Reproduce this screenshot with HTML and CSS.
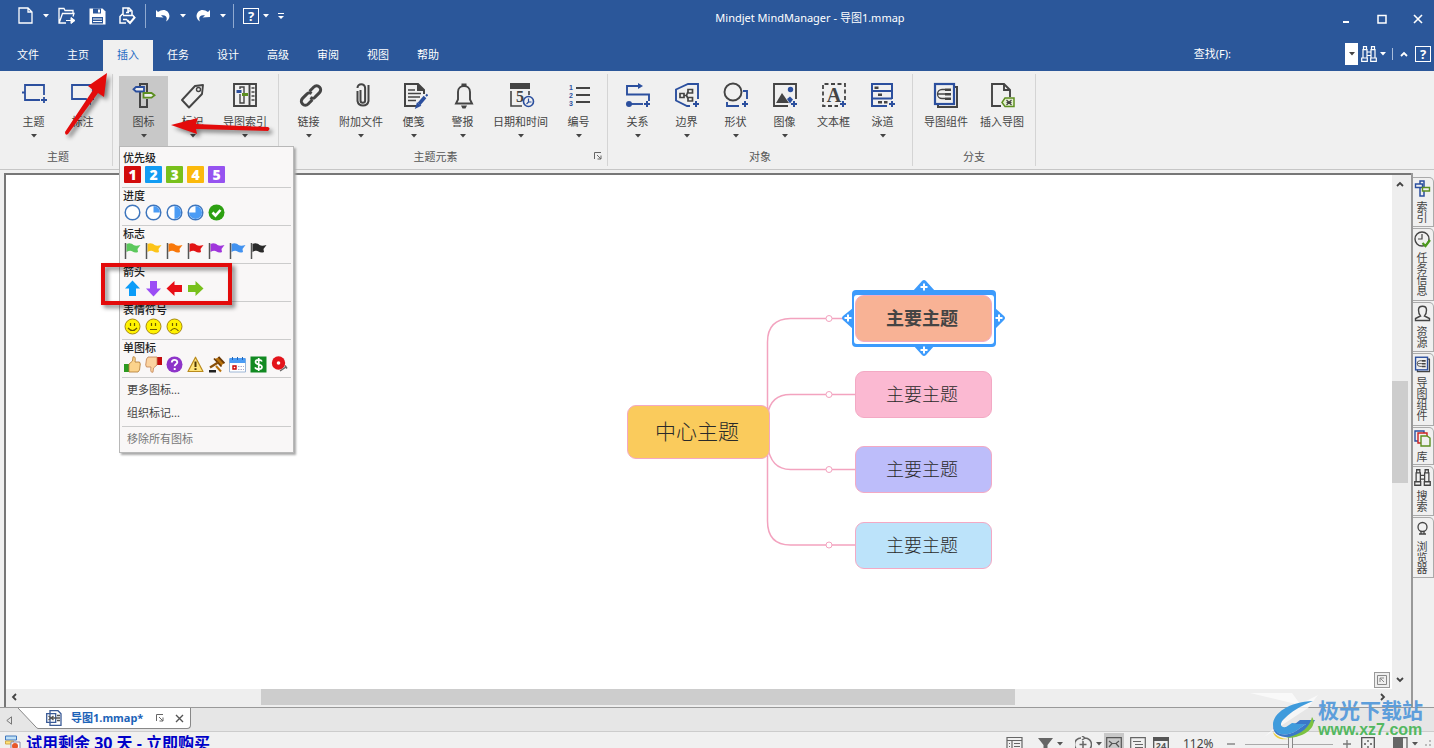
FILE: index.html
```html
<!DOCTYPE html>
<html lang="zh-CN">
<head>
<meta charset="utf-8">
<title>Mindjet MindManager - 导图1.mmap</title>
<link rel="stylesheet" href="styles.css">
</head>
<body>
<svg class="defs" aria-hidden="true">
  <symbol id="caret" viewBox="0 0 6 4"><path d="M0 0h6L3 3.5z" fill="currentColor"/></symbol>
  <symbol id="plus" viewBox="0 0 6 6"><path d="M3 0v6M0 3h6" stroke="#2b4f9e" stroke-width="2"/></symbol>
  <symbol id="flag" viewBox="0 0 17 17"><path d="M2.500 2C6 .5 8 2 9.500 3c2 1.200 4 .8 7 0L13.500 7l.5 3c-2 1-4 .6-5.500-.5C7 8.500 5 8.500 2.500 10z" fill="currentColor"/><path d="M1.500 1v16" stroke="#555" stroke-width="1.500"/></symbol>
  <symbol id="arrow" viewBox="0 0 17 17"><path d="M8.500 0.500l7.500 8h-4V16H5V8.500H1z" fill="currentColor"/></symbol>
  <symbol id="binoculars" viewBox="0 0 16 16"><path d="M2.500.7h3v3h-3zM10.500.7h3v3h-3zM2 3.700h4V12H2zM10 3.700h4V12h-4zM.7 12h5.600v3.300H.7zM9.700 12h5.600v3.300H9.700zM6 6h4v3.500H6z" fill="none" stroke="currentColor" stroke-width="1.200"/></symbol>
  <symbol id="signs" viewBox="0 0 28 28"><path d="M10 5V2h7v8M10 10v15h7v-8" fill="none" stroke="#444" stroke-width="2"/><path d="M6 5h8v4.500H6L3.500 7.200z" fill="#eee" stroke="#2b4f9e" stroke-width="1.800"/><path d="M13.500 11h8l3 2.300-3 2.300h-8z" fill="#eee" stroke="#5d8f21" stroke-width="1.800"/></symbol>
  <symbol id="signs-small" viewBox="0 0 17 17"><path d="M6 4V1h4v6M6 8v8h4v-5" fill="none" stroke="#2b4f9e" stroke-width="1.500"/><path d="M1.500 4h7v3.500h-7z" fill="#f0f0f0" stroke="#2b4f9e" stroke-width="1.400"/><path d="M8.500 7.500h7v3.500h-7z" fill="#f0f0f0" stroke="#5d8f21" stroke-width="1.400"/></symbol>
  <symbol id="parts" viewBox="0 0 28 28"><path d="M6 22v3h19V5h-3" fill="none" stroke="#444" stroke-width="2"/><rect x="3" y="2" width="19" height="20" fill="none" stroke="#2b4f9e" stroke-width="2.200"/><path d="M13 7.500H10a4 4 0 0 0 0 9h3M6 12h7" fill="none" stroke="#444" stroke-width="1.300"/><path d="M13 6.500h6v2.500h-6zM13 11h6v2.500h-6zM13 15.500h6V18h-6z" fill="#444"/></symbol>
</svg>

<header class="titlebar">
  <div class="quick">
    <button aria-label="新建"><svg width="16" height="18" viewBox="0 0 16 18"><path d="M1 1h9l4 4v11H1zM10 1v4h4" fill="none" stroke="#fff" stroke-width="1.300"/></svg></button>
    <button class="drop" aria-label="新建选项"><svg><use href="#caret"/></svg></button>
    <button class="open" aria-label="打开"><svg width="18" height="18" viewBox="0 0 18 18"><path d="M8 16H1V1.500h5l1 2h8V6M1.500 15L4.500 6.500H16l-1 3" fill="none" stroke="#fff" stroke-width="1.300"/><path d="M8 13.500h6M13 10.500l4 3-4 3z" fill="#fff" stroke="#fff"/></svg></button>
    <button class="save" aria-label="保存"><svg width="17" height="17" viewBox="0 0 17 17"><path d="M.5.500h13l3 3v13h-16z" fill="#fff"/><path d="M4 .5h8v5H4zM3 9h11v6.500H3z" fill="#2b579a"/><path d="M9 1.500h2v3H9zM4 10.500h9v1H4zM4 13h9v1H4z" fill="#fff"/></svg></button>
    <button class="print" aria-label="打印"><svg width="17" height="18" viewBox="0 0 17 18"><path d="M4 8V1h6l3 3v4M9 1v3h3M3.500 7L1 9.500V16h6M4 8.500h10l2 2.500M7 5.500h3M4 12.500h4" fill="none" stroke="#fff" stroke-width="1.500"/><path d="M8 13l3 3 5-6" fill="none" stroke="#fff" stroke-width="2"/></svg></button>
    <i class="rule"></i>
    <button aria-label="撤消"><svg width="16" height="14" viewBox="0 0 16 14"><path d="M1 8L1 1l2 2C8-1 14 1 14.500 7c0 2-1.500 4.500-3.500 5.500 2-4 0-7-5-6L8.500 8.500z" fill="#fff"/></svg></button>
    <button class="drop" aria-label="撤消选项"><svg><use href="#caret"/></svg></button>
    <button aria-label="恢复"><svg width="16" height="14" viewBox="0 0 16 14"><path d="M15 8V1l-2 2C8-1 2 1 1.500 7c0 2 1.500 4.500 3.500 5.500-2-4 0-7 5-6L7.500 8.500z" fill="#fff"/></svg></button>
    <button class="drop" aria-label="恢复选项"><svg><use href="#caret"/></svg></button>
    <i class="rule"></i>
    <button class="qhelp" aria-label="帮助"><span>?</span></button>
    <button class="drop" aria-label="帮助选项"><svg><use href="#caret"/></svg></button>
    <button class="drop" aria-label="自定义"><svg viewBox="0 0 6 6" class="custom"><path d="M0 .5h6" stroke="#fff"/><path d="M0 3h6L3 6z" fill="#fff"/></svg></button>
  </div>
  <h1>Mindjet MindManager - 导图1.mmap</h1>
  <div class="winctl">
    <button aria-label="最小化"><svg width="10" height="10" viewBox="0 0 10 10"><path d="M2 8h6" stroke="#fff" stroke-width="2"/></svg></button>
    <button aria-label="最大化"><svg width="10" height="10" viewBox="0 0 10 10"><path d="M1 1.500h8V9H1z" fill="none" stroke="#fff" stroke-width="1.500"/></svg></button>
    <button aria-label="关闭"><svg width="10" height="10" viewBox="0 0 10 10"><path d="M1 1l8 8M9 1L1 9" stroke="#fff" stroke-width="1.600"/></svg></button>
  </div>
</header>

<nav class="tabs">
  <a href="#">文件</a><a href="#">主页</a><a href="#" class="on">插入</a><a href="#">任务</a><a href="#">设计</a><a href="#">高级</a><a href="#">审阅</a><a href="#">视图</a><a href="#">帮助</a>
  <div class="find">
    <label for="find">查找(F):</label><input id="find" type="text">
    <button class="combo" aria-label="查找历史"><svg><use href="#caret"/></svg></button>
    <button class="bino" aria-label="查找"><svg width="16" height="16"><use href="#binoculars"/></svg></button>
    <button class="drop" aria-label="查找选项"><svg><use href="#caret"/></svg></button>
    <i class="bar"></i>
    <button class="fold" aria-label="折叠功能区"><svg width="8" height="6" viewBox="0 0 8 6"><path d="M1 5l3-3 3 3" fill="none" stroke="#fff" stroke-width="1.800"/></svg></button>
    <button class="qhelp" aria-label="帮助"><span>?</span></button>
  </div>
</nav>

<section class="ribbon">
  <div class="group first">
    <div class="tools">
      <button class="tool"><svg class="ic" viewBox="0 0 28 28"><path d="M24 13V3H5v15h15M2 10.500h3" fill="none" stroke="#2b4f9e" stroke-width="1.800"/><path d="M24 15v6M21 18h6" stroke="#2b4f9e" stroke-width="1.800"/></svg><span>主题</span><svg class="dd"><use href="#caret"/></svg></button>
      <button class="tool"><svg class="ic" viewBox="0 0 28 28"><path d="M14 17H3V3h21v14h-3v4l-4-4z" fill="none" stroke="#2b4f9e" stroke-width="1.800"/></svg><span>标注</span></button>
    </div>
    <p>主题</p>
  </div>
  <div class="group icons">
    <div class="tools">
      <div class="holder">
        <button class="tool on" aria-expanded="true"><svg class="ic"><use href="#signs"/></svg><span>图标</span><svg class="dd"><use href="#caret"/></svg></button>
        <div class="menu">
          <section><h2>优先级</h2><div class="row">
            <b class="p1">1</b><b class="p2">2</b><b class="p3">3</b><b class="p4">4</b><b class="p5">5</b></div></section>
          <section><h2>进度</h2><div class="row">
            <svg viewBox="0 0 17 17"><circle cx="8.500" cy="8.500" r="7.300" fill="#fff" stroke="#3f76bd" stroke-width="1.500"/></svg>
            <svg viewBox="0 0 17 17"><circle cx="8.500" cy="8.500" r="7.300" fill="#fff" stroke="#3f76bd" stroke-width="1.500"/><path d="M8.500 8.500V2a6.500 6.500 0 0 1 6.500 6.500z" fill="#4b9cf5"/></svg>
            <svg viewBox="0 0 17 17"><circle cx="8.500" cy="8.500" r="7.300" fill="#fff" stroke="#3f76bd" stroke-width="1.500"/><path d="M8.500 15V2a6.500 6.500 0 0 1 0 13z" fill="#4b9cf5"/></svg>
            <svg viewBox="0 0 17 17"><circle cx="8.500" cy="8.500" r="7.300" fill="#fff" stroke="#3f76bd" stroke-width="1.500"/><path d="M8.500 8.500V2A6.500 6.500 0 1 1 2 8.500z" fill="#4b9cf5" transform="matrix(1 0 0 1 0 0)"/></svg>
            <svg viewBox="0 0 17 17"><circle cx="8.500" cy="8.500" r="8" fill="#2da012"/><path d="M4.500 8.500l3 3L12.500 6" fill="none" stroke="#fff" stroke-width="2.600"/></svg></div></section>
          <section><h2>标志</h2><div class="row">
            <svg class="f1"><use href="#flag"/></svg><svg class="f2"><use href="#flag"/></svg><svg class="f3"><use href="#flag"/></svg><svg class="f4"><use href="#flag"/></svg><svg class="f5"><use href="#flag"/></svg><svg class="f6"><use href="#flag"/></svg><svg class="f7"><use href="#flag"/></svg></div></section>
          <section><h2>箭头</h2><div class="row">
            <svg class="a1"><use href="#arrow"/></svg><svg class="a2"><use href="#arrow"/></svg><svg class="a3"><use href="#arrow"/></svg><svg class="a4"><use href="#arrow"/></svg></div></section>
          <section><h2>表情符号</h2><div class="row">
            <svg viewBox="0 0 17 17"><circle cx="8.500" cy="8.500" r="7.500" fill="#fff200" stroke="#a88a10"/><path d="M6.500 5v3M10.500 5v3M4 10q4.500 5 9 0" fill="none" stroke="#6b5a00" stroke-width="1.200"/></svg>
            <svg viewBox="0 0 17 17"><circle cx="8.500" cy="8.500" r="7.500" fill="#fff200" stroke="#a88a10"/><path d="M6.500 5v3M10.500 5v3M5 11.500h7" fill="none" stroke="#6b5a00" stroke-width="1.200"/></svg>
            <svg viewBox="0 0 17 17"><circle cx="8.500" cy="8.500" r="7.500" fill="#fff200" stroke="#a88a10"/><path d="M6.500 5v3M10.500 5v3M4.500 13q4-5 8 0" fill="none" stroke="#6b5a00" stroke-width="1.200"/></svg></div></section>
          <section><h2>单图标</h2><div class="row">
            <svg viewBox="0 0 17 17"><path d="M0 8h5v8H0z" fill="#2c9a20"/><path d="M5 8l3.500-3L9 .8c2-.5 2.800 1 2 5.200h4.500l.8 2-.8 6-1.500 2H5z" fill="#fbd38c" stroke="#b07a30" stroke-width=".8"/></svg>
            <svg viewBox="0 0 17 17"><path d="M12 1h5v8h-5z" fill="#c40c0c"/><path d="M12 9l-3.500 3-.5 4.200c-2 .5-2.800-1-2-5.200H1.500L.7 9l.8-6L3 1h9z" fill="#fbd3a0" stroke="#c08050" stroke-width=".8"/></svg>
            <svg viewBox="0 0 17 17"><circle cx="8.500" cy="8.500" r="8" fill="#8e35c9"/><path d="M5.800 6.500c0-3.500 5.500-3.300 5.500-.3 0 1.800-2.600 1.800-2.600 4M8.700 12v2" fill="none" stroke="#fff" stroke-width="1.900"/></svg>
            <svg viewBox="0 0 17 17"><path d="M8.500 1.200L16 15.500H1z" fill="#ffe47a" stroke="#b98a1c" stroke-width="1.200" stroke-linejoin="round"/><path d="M8.500 5.500v5.500M8.500 12.300v1.800" stroke="#4d3500" stroke-width="2"/></svg>
            <svg viewBox="0 0 17 17"><path d="M7 3l4-2 5 6-3 3z" fill="#b8720d"/><path d="M6 2.500l7.500 8M10.500 .8l6 6.500" stroke="#6b3a08" stroke-width="1.800"/><path d="M10 6.500l-8 5" stroke="#8a500a" stroke-width="2.200"/><path d="M8 10l5 5.500" stroke="#b8720d" stroke-width="2"/><path d="M1 14h7v2.500H1z" fill="#222"/></svg>
            <svg viewBox="0 0 17 17"><path d="M.5 3h16v13H.5z" fill="#fff" stroke="#9fb7d6"/><path d="M.5 2h16v5H.5z" fill="#4b9cf5"/><path d="M3.500 1v3M8.500 1v3M13.500 1v3" stroke="#2366b5"/><path d="M4 10h3v3H4z" fill="none" stroke="#c00" stroke-width="1.400"/><path d="M9 10.500h6M9 13.500h6" stroke="#aac" stroke-dasharray="1.500 1"/></svg>
            <svg viewBox="0 0 17 17"><path d="M.5.500h16v16H.5z" fill="#128a22"/><path d="M12 5.500C11 3.200 5.500 3.200 5.500 6c0 3.200 6.500 1.700 6.500 5 0 3-6 2.700-7 .3M8.700 2v13" fill="none" stroke="#fff" stroke-width="1.700"/></svg>
            <svg viewBox="0 0 17 17"><circle cx="7.500" cy="7" r="6.700" fill="#e3141b"/><circle cx="7.500" cy="7" r="1.800" fill="#fff"/><path d="M9 15l6-4M14 9.500l2 3" stroke="#666" stroke-width="1.500"/></svg></div></section>
          <button>更多图标...</button>
          <button>组织标记...</button>
          <hr>
          <button class="dim">移除所有图标</button>
        </div>
      </div>
      <button class="tool"><svg class="ic" viewBox="0 0 28 28"><path d="M24 3l-1 9L10 25.500 3 18 16 4z" fill="none" stroke="#444" stroke-width="1.900" stroke-linejoin="round"/><circle cx="19.500" cy="7.500" r="2" fill="none" stroke="#444" stroke-width="1.400"/></svg><span>标记</span><svg class="dd"><use href="#caret"/></svg></button>
      <button class="tool"><svg class="ic" viewBox="0 0 28 28"><path d="M3 2h22v22H3zM18.500 2v22" fill="none" stroke="#444" stroke-width="1.900"/><path d="M20.500 6h3M20.500 10h3M20.500 14h3M20.500 18h3" stroke="#444" stroke-width="1.600"/><path d="M9 7V5h4v16H9V12" fill="none" stroke="#444" stroke-width="1.400"/><path d="M5.500 9.500h5" stroke="#2b4f9e" stroke-width="3"/><path d="M11 12.500h6" stroke="#5d8f21" stroke-width="3"/></svg><span>导图索引</span><svg class="dd"><use href="#caret"/></svg></button>
    </div>
  </div>
  <div class="group elements">
    <div class="tools">
      <button class="tool"><svg class="ic" viewBox="0 0 28 28"><g fill="none" stroke="#444" stroke-width="3" transform="rotate(-45 16 13.500)"><path d="M14 17.500H8a4 4 0 0 1 0-8h6a4 4 0 0 1 4 3"/><path d="M18 9.500h6a4 4 0 0 1 0 8h-6a4 4 0 0 1-4-3"/></g></svg><span>链接</span><svg class="dd"><use href="#caret"/></svg></button>
      <button class="tool"><svg class="ic" viewBox="0 0 28 28"><path d="M13.500 8v10.500a2.300 2.300 0 0 0 4.600 0V6a3.800 3.800 0 0 0-7.600 0" fill="none" stroke="#444" stroke-width="2"/><path d="M10.500 9v10a5.600 5.600 0 0 0 11 0V3" fill="none" stroke="#444" stroke-width="2"/></svg><span>附加文件</span><svg class="dd"><use href="#caret"/></svg></button>
      <button class="tool"><svg class="ic" viewBox="0 0 28 28"><path d="M24 12V8l-6-6H5v22h12M18 2v6h6" fill="none" stroke="#444" stroke-width="2"/><path d="M18 2l6 6h-6z" fill="#444"/><path d="M8 8h7M8 11.500h13M8 15h12M8 18.500h8" stroke="#444" stroke-width="1.500"/><path d="M19 22l6-7" stroke="#2b4f9e" stroke-width="3.500"/><path d="M26 14l1.500-1.500M16.500 25l1-3 2 1.500z" stroke="#2b4f9e" stroke-width="2"/></svg><span>便笺</span><svg class="dd"><use href="#caret"/></svg></button>
      <button class="tool"><svg class="ic" viewBox="0 0 28 28"><path d="M7 21.500h16l-2-4V10c0-8-12-8-12 0v7.500z" fill="none" stroke="#444" stroke-width="1.900"/><path d="M12.500 1.500h5v2.500h-5zM12 23.500h6l-1.500 3h-3z" fill="#444"/></svg><span>警报</span><svg class="dd"><use href="#caret"/></svg></button>
      <button class="tool"><svg class="ic" viewBox="0 0 28 28"><path d="M3 1h20v6H3z" fill="#444"/><path d="M4 9v15h11M22 9v4" fill="none" stroke="#444" stroke-width="1.600"/><text x="9" y="20" class="num">5</text><circle cx="21.500" cy="19.500" r="5" fill="#f0f0f0" stroke="#2b4f9e" stroke-width="1.600"/><path d="M21.500 16.500v3.500h3M21.500 20l-2 2" fill="none" stroke="#2b4f9e" stroke-width="1.200"/></svg><span>日期和时间</span><svg class="dd"><use href="#caret"/></svg></button>
      <button class="tool"><svg class="ic" viewBox="0 0 28 28"><g class="tiny"><text x="4" y="8">1</text><text x="4" y="16">2</text><text x="4" y="24">3</text></g><path d="M11 6h14M11 13h14M11 20h14" stroke="#444" stroke-width="2"/></svg><span>编号</span><svg class="dd"><use href="#caret"/></svg></button>
    </div>
    <p>主题元素</p>
    <button class="launcher" aria-label="更多选项"><svg width="8" height="8" viewBox="0 0 8 8"><path d="M.5 7V.5H7M3 3l4 4M7 3.500V7H3.500" fill="none" stroke="#666"/></svg></button>
  </div>
  <div class="group">
    <div class="tools">
      <button class="tool"><svg class="ic" viewBox="0 0 28 28"><path d="M14 4H3v8.500h22V19" fill="none" stroke="#2b4f9e" stroke-width="1.900"/><path d="M14 1l5 3-5 3z" fill="#2b4f9e"/><circle cx="5" cy="22" r="3" fill="#2b4f9e"/><path d="M7 22h12" stroke="#2b4f9e" stroke-width="1.900"/><use href="#plus" x="20" y="19" width="6" height="6"/></svg><span>关系</span><svg class="dd"><use href="#caret"/></svg></button>
      <button class="tool"><svg class="ic" viewBox="0 0 28 28"><path d="M25 17V2H15L3 7.500v11L14 24h3" fill="none" stroke="#2b4f9e" stroke-width="1.900"/><path d="M7 11.500h4v4H7zM15 7.500h4.500V11H15zM15 15.500h4.500V19H15zM11 13.500h2.500L15 9.500M13.500 13.500l1.500 3" fill="none" stroke="#444" stroke-width="1.700"/><use href="#plus" x="20" y="19" width="6" height="6"/></svg><span>边界</span><svg class="dd"><use href="#caret"/></svg></button>
      <button class="tool"><svg class="ic" viewBox="0 0 28 28"><circle cx="11" cy="10" r="8.500" fill="none" stroke="#444" stroke-width="1.900"/><path d="M21 9h4v8M5 20v4h12" fill="none" stroke="#2b4f9e" stroke-width="1.900"/><use href="#plus" x="20" y="19" width="6" height="6"/></svg><span>形状</span><svg class="dd"><use href="#caret"/></svg></button>
      <button class="tool"><svg class="ic" viewBox="0 0 28 28"><path d="M25 17V2H3v22h14" fill="none" stroke="#444" stroke-width="1.900"/><circle cx="19.500" cy="7.500" r="2.700" fill="#2b4f9e"/><path d="M5 21l6-10 7 10z" fill="#444"/><path d="M16 17l3-2.500 3 3-3 4z" fill="#2b4f9e"/><use href="#plus" x="20" y="19" width="6" height="6"/></svg><span>图像</span><svg class="dd"><use href="#caret"/></svg></button>
      <button class="tool"><svg class="ic" viewBox="0 0 28 28"><path d="M25 18V2H3v22h15" fill="none" stroke="#444" stroke-width="1.800" stroke-dasharray="4 2.500"/><text x="14" y="20" class="big">A</text><use href="#plus" x="20" y="19" width="6" height="6"/></svg><span>文本框</span></button>
      <button class="tool"><svg class="ic" viewBox="0 0 28 28"><path d="M23 17V2H3v22h15M3 9h20M3 16.500h20" fill="none" stroke="#2b4f9e" stroke-width="2"/><path d="M5.500 4.500h4v2.500h-4zM9 11.500h4V14H9zM9 19h4v2.500H9zM15 19h3.500v2.500H15z" fill="#444"/><use href="#plus" x="20" y="19" width="6" height="6"/></svg><span>泳道</span><svg class="dd"><use href="#caret"/></svg></button>
    </div>
    <p>对象</p>
  </div>
  <div class="group">
    <div class="tools">
      <button class="tool"><svg class="ic"><use href="#parts"/></svg><span>导图组件</span></button>
      <button class="tool"><svg class="ic" viewBox="0 0 28 28"><path d="M13 24H4V2h12l6 6v7M16 2v6h6" fill="none" stroke="#444" stroke-width="1.900"/><path d="M14 20.500l3-4.500h9v8.500h-9z" fill="#e4f0d0" stroke="#5d8f21" stroke-width="1.500"/><path d="M18.500 18l5 5M23.500 18l-5 5M18.500 20.500h5" stroke="#444" stroke-width="1.200"/></svg><span>插入导图</span></button>
    </div>
    <p>分支</p>
  </div>
</section>

<main class="work">
  <div class="frame">
    <div class="canvas">
      <svg class="links" width="870" height="420" viewBox="0 0 870 420"><g fill="none" stroke="#f3a3bf" stroke-width="1.500">
        <path d="M761.500 300V167q0-23 23-23.500H849M761.500 240q3-20.500 23-20.500H849M761.500 270q3 24.500 23 24.500H849M761.500 270v76q0 24 23 24H849"/></g>
        <g fill="#fff" stroke="#f3a3bf"><circle cx="823" cy="143.500" r="3"/><circle cx="823" cy="219.500" r="3"/><circle cx="823" cy="294.500" r="3"/><circle cx="823" cy="370" r="3"/></g></svg>
      <div class="node center">中心主题</div>
      <svg class="select" width="164" height="76" viewBox="0 0 164 76"><g fill="#3d9bfc"><path d="M71 11L80 1q2-2 4 0l9 10zM71 65L80 75q2 2 4 0l9-10zM11 28L1 36q-2 2 0 4l10 9zM153 28l9 8q2 2 0 4l-9 9z"/><rect x="10" y="10" width="144" height="57" rx="4"/></g><rect x="12" y="15" width="140" height="49" rx="3" fill="#fff"/><path d="M82 3.500v7M78.500 7h7M82 66.500v7M78.500 70h7M6 34.500v7M2.500 38h7M157 34.500v7M153.500 38h7" stroke="#fff" stroke-width="2"/></svg>
      <div class="node n1">主要主题</div>
      <div class="node n2">主要主题</div>
      <div class="node n3">主要主题</div>
      <div class="node n4">主要主题</div>
      <button class="overview" aria-label="概览"><svg width="10" height="10" viewBox="0 0 10 10"><path d="M.5.500h9v9h-9zM3 7V3h4M3 3l4 4" fill="none" stroke="#888"/></svg></button>
    </div>
    <div class="vbar"><svg width="8" height="6" viewBox="0 0 8 6"><path d="M1 5l3-3 3 3" fill="none" stroke="#444" stroke-width="1.800"/></svg><i></i><svg width="8" height="6" viewBox="0 0 8 6"><path d="M1 1l3 3 3-3" fill="none" stroke="#444" stroke-width="1.800"/></svg></div>
    <div class="hbar"><svg width="6" height="8" viewBox="0 0 6 8"><path d="M5 1L2 4l3 3" fill="none" stroke="#444" stroke-width="1.800"/></svg><i></i><svg width="6" height="8" viewBox="0 0 6 8"><path d="M1 1l3 3-3 3" fill="none" stroke="#444" stroke-width="1.800"/></svg></div>
  </div>
  <aside class="side">
    <button class="s2"><svg><use href="#signs-small"/></svg><span>索引</span></button>
    <button class="s4"><svg viewBox="0 0 17 17"><circle cx="8" cy="8" r="7" fill="none" stroke="#444" stroke-width="1.400"/><path d="M8 3v5H4" fill="none" stroke="#444" stroke-width="1.200"/><path d="M8.500 12l3 3 4.500-6" fill="none" stroke="#4c9a1c" stroke-width="2.200"/></svg><span>任务信息</span></button>
    <button class="s2"><svg viewBox="0 0 17 17"><path d="M1.500 15.500v-2l5-2.500C5 9.500 4.500 7 4.500 5c0-5 8-5 8 0 0 2-.5 4.500-2 6l5 2.500v2z" fill="none" stroke="#444" stroke-width="1.400"/></svg><span>资源</span></button>
    <button class="s4"><svg viewBox="1 0 26 27"><use href="#parts" width="28" height="28"/></svg><span>导图组件</span></button>
    <button class="s1"><svg viewBox="0 0 17 17" fill="#f0f0f0" stroke-width="1.400"><path d="M1 1h9v10H1z" stroke="#2b4f9e"/><path d="M4 3h9v10H4z" stroke="#c22"/><path d="M7 6h6l3 2v8H7z" stroke="#5d8f21"/></svg><span>库</span></button>
    <button class="s2"><svg><use href="#binoculars"/></svg><span>搜索</span></button>
    <button class="s3"><svg viewBox="0 0 17 17"><circle cx="8.500" cy="7" r="4.500" fill="none" stroke="#444" stroke-width="1.300"/><path d="M5 14h7M7 11.500v2M10 11.500v2" stroke="#444" stroke-width="1.300"/></svg><span>浏览器</span></button>
  </aside>
</main>

<div class="docs">
  <svg class="back" width="6" height="9" viewBox="0 0 6 9"><path d="M5.500.8v7.400L.8 4.500z" fill="none" stroke="#777"/></svg>
  <svg class="slant" width="20" height="21" viewBox="0 0 20 21"><path d="M0 0l17 18q2 2.500 3 2.500V0z" fill="#fff"/><path d="M0 0l17 18q2 2.500 3 2.500" fill="none" stroke="#888"/></svg>
  <div class="doc">
    <svg width="16" height="16" viewBox="0 0 16 16"><path d="M4 .7h8l3 3v11.600H4zM.7 3.700h9v8.600h-9z" fill="#fff" stroke="#3a5a96" stroke-width="1.300"/><path d="M2.500 6l5 4M2.500 10l5-4M11 5.500h3M11 8h3M11 10.500h3M5 8h6" stroke="#555" stroke-width="1.300"/></svg>
    <a href="#">导图1.mmap*</a>
    <button aria-label="还原"><svg width="8" height="8" viewBox="0 0 8 8"><path d="M.5 7V.5H7M3 3l4 4M7 3.500V7H3.500" fill="none" stroke="#666"/></svg></button>
    <button aria-label="关闭"><svg width="9" height="9" viewBox="0 0 9 9"><path d="M1 1l7 7M8 1L1 8" stroke="#555" stroke-width="1.400"/></svg></button>
  </div>
</div>

<footer class="status">
  <svg class="gift" width="16" height="16" viewBox="0 0 16 16"><path d="M.5 1h11v4H.5z" fill="#bfe0f5" stroke="#3f76bd"/><path d="M.5 6h8v3h-8z" fill="#ffe47a" stroke="#d2a94a"/><path d="M6 7h9v8H6z" fill="#fff" stroke="#88a"/><circle cx="10" cy="11" r="3" fill="#e7572a"/></svg>
  <a class="trial" href="#">试用剩余 30 天 - 立即购买</a>
  <div class="view">
    <button class="w17" aria-label="大纲"><svg width="17" height="16" viewBox="0 0 17 16"><path d="M1 1.500h15v13H1zM1 4.500h15M6 4.500v10M8 7.500h6M8 10.500h6M3 7.500h1M3 10.500h1" fill="none" stroke="#666" stroke-width="1.200"/></svg></button>
    <button class="funnel" aria-label="筛选"><svg width="15" height="15" viewBox="0 0 15 15"><path d="M0 1h15L9.500 8v7l-4-2V8z" fill="#666"/></svg><svg class="dd"><use href="#caret"/></svg></button>
    <button class="focus" aria-label="焦点"><svg width="17" height="17" viewBox="0 0 17 17"><path d="M6 2a6.500 6.500 0 0 0 0 13M10 2a6.500 6.500 0 0 1 0 13M8 5v7M4.500 8.500h7M7 0l3 2-3 2" fill="none" stroke="#666" stroke-width="1.500"/></svg><svg class="dd"><use href="#caret"/></svg></button>
    <button class="map" aria-label="导图视图"><svg width="16" height="14" viewBox="0 0 16 14"><path d="M.7.700h14.600v12.600H.7zM3 4l3 2.500h4L13 4M3 10l3-3.500M13 10l-3-3.500" fill="none" stroke="#555" stroke-width="1.200"/></svg></button>
    <button class="w17" aria-label="大纲视图"><svg width="16" height="14" viewBox="0 0 16 14"><path d="M.7.700h14.600v12.600H.7zM3 4.500h8M5 7.500h8M5 10.500h8" fill="none" stroke="#666" stroke-width="1.200"/></svg></button>
    <button class="cal" aria-label="日程"><svg width="16" height="16" viewBox="0 0 16 16"><path d="M.7 2h14.600v13.300H.7z" fill="none" stroke="#555" stroke-width="1.300"/><path d="M0 1h16v4H0z" fill="#555"/><text x="8" y="13">24</text></svg></button>
    <span class="pct">112%</span>
    <button class="zm" aria-label="缩小"><svg width="8" height="8" viewBox="0 0 8 8"><path d="M0 4h8" stroke="#777" stroke-width="1.300"/></svg></button>
    <input class="zoom" type="range" min="0" max="100" value="52" aria-label="缩放">
    <button class="zp" aria-label="放大"><svg width="8" height="8" viewBox="0 0 8 8"><path d="M0 4h8M4 0v8" stroke="#777" stroke-width="1.300"/></svg></button>
    <button class="fit" aria-label="适合"><svg width="14" height="14" viewBox="0 0 14 14"><path d="M.7.700h12.600v12.600H.7zM7 3v2M3 7h2M9 7h2M7 9v2" fill="none" stroke="#555" stroke-width="1.300"/></svg></button>
    <button class="pane" aria-label="窗格"><svg width="15" height="14" viewBox="0 0 15 14"><path d="M0 0h10v14H0z" fill="#666"/><path d="M10 .7h4v12.600" fill="none" stroke="#666" stroke-width="1.300"/></svg><svg class="dd"><use href="#caret"/></svg></button>
    <svg class="grip" width="8" height="8" viewBox="0 0 8 8"><path d="M5 0h2v2H5zM5 4h2v2H5zM1 4h2v2H1z" fill="#bbb"/></svg>
  </div>
</footer>

<div class="mark">
  <svg width="184" height="60" viewBox="0 0 184 60"><path d="M15 5h42l8 11 18-9-10 13-44 29 36-32z" fill="#fff" opacity=".65"/><path d="M78 13C54 14 38 25 38 37c0 10 13 12 23 6l10-7-14-1-6 4c-6 1-7-4-1-9 6-6 15-12 28-17z" fill="#3f9bdc"/><path d="M38 38c2 9 13 11 23 5l10-7h-11l5-4h15c-6 13-19 19-30 17-8-1-12-5-12-11z" fill="#3a78c8"/><path d="M77 29c6 8-5 21-26 21 17-4 24-12 26-21z" fill="#7cc242"/><path d="M38 44c2 7 9 8 16 7-8 0-12-3-16-7z" fill="#e9cf3d"/></svg>
  <div><b>极光下载站</b><span>www.xz7.com</span></div>
</div>

<svg class="notes" width="300" height="310" viewBox="0 0 300 310">
  <g fill="#e30b0b"><path d="M107 73l-3 24-6-4L68 134q-3 2-3-2L93 90l-5-4z"/><path d="M171 125l27-7-2 6 72 3q3 1 0 4l-72-2 1 5z"/></g>
  <rect x="103" y="265" width="127" height="38" fill="none" stroke="#e30b0b" stroke-width="4"/>
</svg>
</body>
</html>
```
FILE: styles.css
```css
* { box-sizing: border-box; }
body {
  margin: 0; height: 100vh; overflow: hidden; position: relative;
  display: flex; flex-direction: column; background: #f0f0f0; color: #444;
  font: 11px/16px "Noto Sans", "Noto Sans CJK SC", sans-serif;
}
h1, h2, p { margin: 0; font-size: inherit; font-weight: normal; }
button { border: 0; padding: 0; margin: 0; background: none; color: inherit; font: inherit; display: flex; align-items: center; justify-content: center; }
a { color: inherit; text-decoration: none; }
svg { display: block; flex: none; }
.defs { position: absolute; width: 0; height: 0; }

.titlebar { flex: none; height: 40px; background: #2b579a; color: #fff; display: flex; align-items: flex-start; }
.quick { display: flex; align-items: center; height: 32px; padding-left: 18px; }
.drop { width: 12px; height: 16px; color: #fff; }
.quick .drop { width: 24px; }
.drop svg { width: 6px; height: 4px; }
.drop .custom { height: 6px; }
.quick .open, .quick .save, .quick .print { width: 30px; }
.quick .open { margin-left: -6px; }
.rule { width: 1px; height: 24px; background: #8fa9d0; margin: 0 9px 0 3px; }
.drop + .rule { margin-left: -2px; }
.qhelp { width: 16px; height: 16px; border: 1px solid #fff; color: #fff; font-weight: bold; font-size: 13px; }
.quick .qhelp + .drop { width: 13px; }
.quick .qhelp + .drop + .drop { width: 18px; }
h1 { flex: 1; padding-top: 10px; text-align: center; }
.winctl { display: flex; gap: 4px; }
.winctl button { width: 32px; height: 37px; }

.tabs { flex: none; height: 31px; padding-left: 3px; background: #2b579a; color: #fff; display: flex; }
.tabs a { width: 50px; line-height: 30px; text-align: center; }
.tabs .on { background: #f0f0f0; color: #1f6ac4; }
.find { margin-left: auto; display: flex; align-items: center; height: 28px; padding-right: 3px; }
.find input { width: 114px; height: 20px; border: 0; background: transparent; color: #fff; }
.combo { width: 13px; height: 22px; background: #fff; color: #444; }
.combo svg { width: 6px; height: 4px; }
.bino { color: #fff; width: 22px; }
.find .drop { width: 6px; }
.bar { width: 1px; height: 12px; background: #a9bddb; margin: 0 4px 0 6px; }
.fold { width: 14px; height: 16px; margin-right: 4px; }

.ribbon { flex: none; height: 99px; padding: 3px 0 3px 3px; display: flex; background: #f0f0f0; border-bottom: 1px solid #c6c6c6; }
.group { position: relative; display: flex; flex-direction: column; justify-content: space-between; padding: 2px 5px 1px; border-right: 1px solid #d4d4d4; }
.group.first, .group.icons { padding-left: 6px; }
.group.elements { padding-right: 4px; }
.group p { text-align: center; color: #555; }
.group.elements p { padding-right: 16px; }
.tools { display: flex; }
.tool { height: 70px; min-width: 49px; padding: 6px; flex-direction: column; justify-content: flex-start; }
.tool.on { background: #c8c8c8; }
.ic { width: 28px; height: 28px; margin-bottom: 4px; }
.dd { width: 6px; height: 4px; margin-top: 4px; }
.num { font: bold 16px "Liberation Serif", serif; fill: #444; }
.big { font: bold 20px "Liberation Serif", serif; fill: #444; text-anchor: middle; }
.tiny { font: bold 7px "Liberation Sans", sans-serif; fill: #2b4f9e; }
.launcher { position: absolute; right: 5px; bottom: 6px; }

.holder { position: relative; }
.menu { position: absolute; z-index: 5; left: 0; top: 100%; width: 175px; padding: 3px 2px 2px; background: #f9f7f7; border: 1px solid #b8b8b8; box-shadow: 2px 2px 2px #aaa; }
.menu section { height: 38px; border-bottom: 1px solid #ccc; padding: 0 0 0 1px; }
.menu h2 { font-weight: 500; color: #222; }
.row { display: flex; gap: 4px; padding-left: 1px; }
.row svg, .row b { width: 17px; height: 17px; }
.row b { color: #fff; text-align: center; font: 900 14px/17px "Noto Sans", sans-serif; border-radius: 1px; }
.p1 { background: #d20b0b; } .p2 { background: #129cf3; } .p3 { background: #78c01c; } .p4 { background: #fbb90c; } .p5 { background: #9653f0; }
.f1 { color: #5cc85c; } .f2 { color: #fcc419; } .f3 { color: #f9780a; } .f4 { color: #e31414; } .f5 { color: #a035dc; } .f6 { color: #4292f0; } .f7 { color: #2a2a2a; }
.a1 { color: #0c9cf8; } .a2 { color: #9b4df5; transform: rotate(180deg); } .a3 { color: #e80e16; transform: rotate(-90deg); } .a4 { color: #78c01c; transform: rotate(90deg); }
.menu button { width: 100%; height: 23px; padding-left: 5px; justify-content: flex-start; }
.menu hr { margin: 2px 0 0; border: 0; border-top: 1px solid #ccc; }
.menu .dim { color: #777; }

.work { flex: 1; min-height: 0; display: flex; padding: 3px 0 0 4px; border-bottom: 1px solid #999; }
.frame { flex: 1; min-width: 0; display: grid; grid-template: 1fr 16px / 1fr 16px; border: 2px solid #777; border-bottom: 0; border-right: 0; background: #eee; padding: 0 3px 2px 0; }
.canvas { position: relative; background: #fff; overflow: hidden; }
.vbar { display: grid; grid-template-rows: 18px 188fr 103fr 188fr 18px; justify-items: center; align-items: center; }
.vbar i { grid-row: 3; width: 16px; height: 100%; background: #cdcdcd; }
.vbar svg:last-child { grid-row: 5; }
.hbar { display: grid; grid-template-columns: 16px 239fr 754fr 359fr 18px; align-items: center; justify-items: center; }
.hbar i { grid-column: 3; width: 100%; height: 16px; background: #cdcdcd; }
.hbar svg:last-child { grid-column: 5; }
.overview { position: absolute; right: 2px; bottom: 1px; width: 16px; height: 16px; border: 1px solid #999; background: #eee; }

.links, .select, .node { position: absolute; }
.links { left: 0; top: 0; }
.node { width: 137px; height: 47px; padding: 0 3px 4px 0; border: 1px solid #f3a9c4; border-radius: 9px; display: flex; align-items: center; justify-content: center; color: #2a2a2a; font-size: 18px; font-family: "Noto Sans CJK SC", sans-serif; font-weight: 300; }
.center { left: 621px; top: 230px; width: 143px; height: 54px; background: #facb5c; font-size: 21px; }
.select { left: 836px; top: 105px; }
.n1 { left: 849px; top: 120px; background: #f8b295; color: #444; font-weight: bold; }
.n2 { left: 849px; top: 196px; background: #fbb9d2; }
.n3 { left: 849px; top: 271px; background: #bdbdfa; }
.n4 { left: 849px; top: 347px; background: #bce3fa; }

.side { width: 23px; border-left: 2px solid #999; padding-top: 4px; display: flex; flex-direction: column; gap: 1px; }
.side button { flex-direction: column; justify-content: flex-start; gap: 4px; padding: 2px 2px 0 0; border: 1px solid #aaa; border-left: 0; border-top-right-radius: 5px; background: #f0f0f0; }
.side svg { width: 17px; height: 17px; }
.side span { writing-mode: vertical-rl; text-orientation: upright; line-height: 16px; font-family: "Noto Sans CJK SC", sans-serif; }
.s1 { height: 38px; } .s2 { height: 50px; } .s3 { height: 61px; } .s4 { height: 73px; }

.docs { flex: none; height: 24px; display: flex; align-items: flex-start; background: #e6e6e6; border-bottom: 1px solid #ccc; padding-left: 6px; }
.back { margin: 8px 6px 0 0; }
.doc { height: 21px; display: flex; align-items: center; gap: 9px; padding: 0 6px 0 8px; background: #fff; border: 1px solid #888; border-width: 0 1px 1px 0; border-radius: 0 0 4px 0; }
.doc a { color: #1c63b8; font-weight: bold; }
.doc button { width: 10px; height: 14px; }
.doc a + button { margin: 0 0 0 3px; }

.status { flex: none; height: 16px; overflow: hidden; display: flex; align-items: flex-start; padding-left: 5px; }
.gift { margin: 3px 5px 0 0; }
.trial { color: #0000c8; font-size: 16px; font-weight: bold; line-height: 22px; white-space: nowrap; }
.view { margin-left: auto; display: flex; align-items: center; height: 24px; padding-right: 2px; }
.view button { height: 22px; }
.view .dd { margin: 0 0 0 4px; color: #555; }
.w17 { width: 17px; }
.funnel { margin-left: 15px; }
.focus { margin: 0 2px 0 12px; }
.map { width: 20px; background: #c8c8c8; margin-right: 5px; }
.cal { margin-left: 7px; }
.cal text { font: bold 9px "Noto Sans", sans-serif; fill: #555; text-anchor: middle; }
.pct { width: 30px; margin: 0 14px; font-size: 12px; }
.zoom { appearance: none; width: 88px; height: 16px; margin: 0 10px; background: linear-gradient(#aaa, #aaa) center / 100% 1px no-repeat; }
.zoom::-webkit-slider-thumb { appearance: none; width: 5px; height: 16px; border: 1px solid #888; background: #eee; }
.fit { margin: 0 18px 0 10px; }
.grip { margin-left: 6px; }

.mark { position: absolute; right: 11px; bottom: 0; display: flex; align-items: flex-start; pointer-events: none; }
.mark svg { margin-right: -101px; }
.mark div { position: relative; margin-top: 10px; display: flex; flex-direction: column; }
.mark b { color: #5d9edb; font: bold 21px/22px "Noto Sans CJK SC", sans-serif; }
.mark span { color: #53b860; font: bold 16px/20px "Liberation Sans", sans-serif; }
.notes { position: absolute; left: 0; top: 0; z-index: 9; pointer-events: none; filter: drop-shadow(3px 3px 2px #0007); }
```
